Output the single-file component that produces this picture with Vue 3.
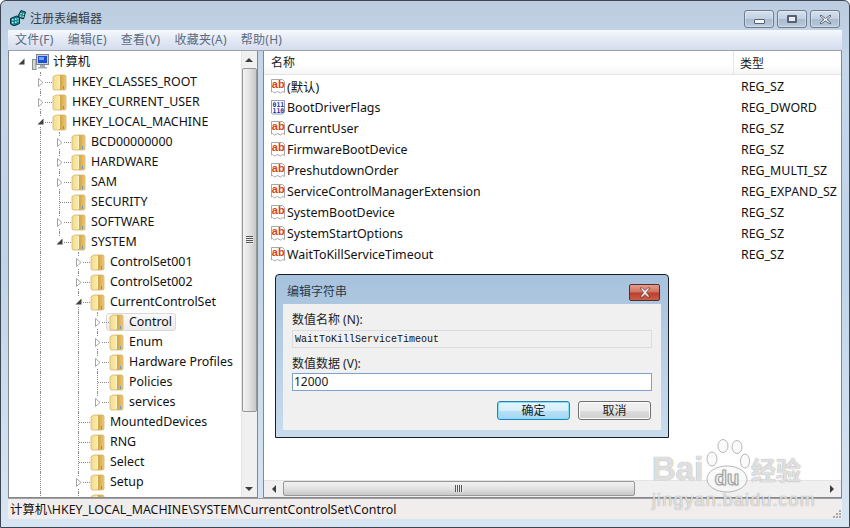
<template>
  <div class="window">
    <div class="titlebar">
      <svg class="app-icon" width="16" height="16" viewBox="0 0 16 16">
        <path d="M0.500 8.500l6-2.500 3 1.500v6l-5.500 2.500-3.500-2z" fill="#14808e" stroke="#07303c" />
        <path d="M2 9h1.500v1.500H2zM5 8.500h1.500V10H5zM2 12h1.500v1.500H2zM5 11.500h1.500V13H5zM7.500 8h1v1.500h-1zM7.500 10.500h1V12h-1z" fill="#b8f4f4" />
        <path d="M8 6l3-5.500 4.500 1.500-2 7-4-1.500z" fill="#1f8f86" stroke="#07303c" />
        <path d="M10.500 3h1.200v1.200h-1.200zM13 3.500h1.200v1.200H13zM10 5.500h1.200v1.200H10zM12.500 6h1.200v1.200h-1.200z" fill="#c6f7ee" />
      </svg>
      <span class="title">注册表编辑器</span>
      <div class="caption-btns">
        <div class="cap-btn cap-min"><i></i></div>
        <div class="cap-btn cap-max"><i></i></div>
        <div class="cap-btn cap-close">
          <svg width="13" height="11" viewBox="0 0 13 11"><path d="M2 1l4.500 3.500L11 1l1 1-4 3.500L12 9l-1 1-4.500-3L2 10 1 9l4-3.500L1 2z" fill="#f4f6f8" stroke="#5a6a7c" stroke-width="1" /></svg>
        </div>
      </div>
    </div>

    <div class="menubar">
      <span v-for="m in menus" :key="m" class="menu-item">{{ m }}</span>
    </div>

    <div class="main">
      <div class="tree-pane">
        <div class="tree-scroll">
          <div v-for="(row, i) in rows" :key="i" class="tree-row" :class="{ root: row.level === 0 }">
            <span
              v-for="(g, j) in row.guides"
              :key="j"
              class="guide"
              :class="{ on: g }"
            ></span>
            <span class="expander" :class="{ stem: row.level > 0, 'stem-end': row.last }">
              <span v-if="row.level > 0" class="hdots"></span>
              <svg v-if="row.state === 'open'" class="arrow" width="9" height="9" viewBox="0 0 9 9"><path d="M7.500 1.500v6h-6z" fill="#404040" /></svg>
              <svg v-else-if="row.state === 'closed'" class="arrow" width="9" height="11" viewBox="0 0 9 11"><path d="M2.500 1.500l4.500 4-4.500 4z" fill="#fff" stroke="#a6a6a6" /></svg>
            </span>
            <span class="node" :class="{ selected: row.selected }">
              <svg v-if="row.level === 0" class="computer" width="17" height="18" viewBox="0 0 17 18">
                <rect x="0.500" y="6.500" width="3.500" height="10" fill="#d4d7d6" stroke="#8b938f" />
                <rect x="4.500" y="1.500" width="12" height="10" fill="#c9ced4" stroke="#7a8490" />
                <rect x="6" y="3" width="9" height="7" fill="#1d4fd0" />
                <rect x="7" y="4" width="5" height="3" fill="#6aa6ff" />
                <path d="M8 12h5v2H8zM6 14h9v1.500H6z" fill="#a4abb0" />
              </svg>
              <svg v-else class="folder" width="15" height="17" viewBox="0 0 15 17">
                <defs>
                  <linearGradient id="fold" x1="0" x2="1" y1="0" y2="0">
                    <stop offset="0" stop-color="#f4dc8c" />
                    <stop offset=".42" stop-color="#f9e9a6" />
                    <stop offset=".58" stop-color="#d3a548" />
                    <stop offset="1" stop-color="#ecca7a" />
                  </linearGradient>
                </defs>
                <path d="M1 2.500l3-1.500h9l1 1v13l-1 1H2l-1-1z" fill="url(#fold)" stroke="#d3b670" stroke-width=".8" />
                <path d="M7 2h1v13H7z" fill="#fdf4c8" />
                <path d="M11 12h1v3h-1z" fill="#5b9fd8" />
              </svg>
              <span v-if="row.name" class="node-label">{{ row.name }}</span>
            </span>
          </div>
        </div>
        <div class="vscroll">
          <div class="sb-btn"><i class="tri-up"></i></div>
          <div class="v-track">
            <div class="v-thumb"><i class="v-grip"></i></div>
          </div>
          <div class="sb-btn"><i class="tri-down"></i></div>
        </div>
      </div>

      <div class="list-pane">
        <div class="list-head">
          <div class="col-name">名称</div>
          <div class="col-type">类型</div>
        </div>
        <div class="list-body">
          <div v-for="v in values" :key="v.name" class="list-row">
            <div class="col-name cell">
              <svg v-if="v.bin" class="val-icon" width="16" height="17" viewBox="0 0 16 17">
                <path d="M1.500 1.500h13v12l-2 1.500h-10l-1-1z" fill="#fff" stroke="#8d97c0" />
                <text class="bits"><tspan x="2.500" y="7.500">011</tspan><tspan x="2.500" y="13.500">110</tspan></text>
              </svg>
              <svg v-else class="val-icon" width="16" height="17" viewBox="0 0 16 17">
                <path d="M1.500 1.500h11l2 2v11l-2-1-2 1.500-3-1.500-3 1.500-2-1.500-1 .5z" fill="#fff" stroke="#a8a8a8" />
                <text x="1.800" y="10" class="ab">ab</text>
              </svg>
              <span>{{ v.name }}</span>
            </div>
            <div class="col-type cell">{{ v.type }}</div>
          </div>
        </div>
        <div class="hscroll">
          <div class="sb-btn h"><i class="tri-left"></i></div>
          <div class="h-track">
            <div class="h-thumb"><i class="h-grip"></i></div>
          </div>
          <div class="sb-btn h"><i class="tri-right"></i></div>
        </div>
      </div>
    </div>

    <div class="statusbar">
      <span>计算机\HKEY_LOCAL_MACHINE\SYSTEM\CurrentControlSet\Control</span>
      <svg class="grip" width="10" height="10" viewBox="0 0 10 10">
        <path d="M7 1h2v2H7zM4 4h2v2H4zM7 4h2v2H7zM1 7h2v2H1zM4 7h2v2H4zM7 7h2v2H7z" fill="#a9a9a9" />
      </svg>
    </div>

    <!-- 编辑字符串 对话框 -->
    <div class="dialog">
      <div class="dlg-title">
        <span class="dlg-caption">编辑字符串</span>
        <div class="dlg-close">
          <svg width="14" height="11" viewBox="0 0 14 11"><path d="M2 1h2.500L7 3.500 9.500 1H12L8.500 5.500 12 10H9.500L7 7.500 4.500 10H2l3.500-4.500z" fill="#f6eeee" stroke="#6a3028" stroke-width=".7" /></svg>
        </div>
      </div>
      <div class="dlg-body">
        <div class="dlg-label">数值名称 (N):</div>
        <div class="dlg-field readonly">WaitToKillServiceTimeout</div>
        <div class="dlg-label second">数值数据 (V):</div>
        <div class="dlg-field edit">12000</div>
        <div class="dlg-btns">
          <div class="dlg-btn default">确定</div>
          <div class="dlg-btn">取消</div>
        </div>
      </div>
    </div>

    <!-- 水印 -->
    <div class="watermark">
      <div class="wm-main">
        <span class="wm-bai">Bai</span>
        <svg class="paw" width="46" height="56" viewBox="0 0 46 56">
          <g fill="#f8f8f8" fill-opacity=".75" stroke="#9a9a9a" stroke-opacity=".7" stroke-width="1">
            <ellipse cx="8" cy="20" rx="5" ry="7" />
            <ellipse cx="19" cy="7" rx="5" ry="6.500" />
            <ellipse cx="33" cy="8" rx="5" ry="6.500" />
            <ellipse cx="41" cy="22" rx="4.500" ry="7" />
            <ellipse cx="23" cy="40" rx="20" ry="13" />
          </g>
          <text x="23" y="46" text-anchor="middle" class="wm-du">du</text>
        </svg>
        <span class="wm-cn">经验</span>
      </div>
      <div class="wm-url">jingyan.baidu.com</div>
    </div>
  </div>
</template>

<script setup>
const menus = ['文件(F)', '编辑(E)', '查看(V)', '收藏夹(A)', '帮助(H)']

const tree = {
  name: '计算机',
  children: [
    { name: 'HKEY_CLASSES_ROOT', closed: true },
    { name: 'HKEY_CURRENT_USER', closed: true },
    {
      name: 'HKEY_LOCAL_MACHINE',
      more: true,
      children: [
        { name: 'BCD00000000', closed: true },
        { name: 'HARDWARE', closed: true },
        { name: 'SAM', closed: true },
        { name: 'SECURITY' },
        { name: 'SOFTWARE', closed: true },
        {
          name: 'SYSTEM',
          children: [
            { name: 'ControlSet001', closed: true },
            { name: 'ControlSet002', closed: true },
            {
              name: 'CurrentControlSet',
              children: [
                { name: 'Control', closed: true, selected: true },
                { name: 'Enum', closed: true },
                { name: 'Hardware Profiles', closed: true },
                { name: 'Policies' },
                { name: 'services', closed: true }
              ]
            },
            { name: 'MountedDevices' },
            { name: 'RNG' },
            { name: 'Select' },
            { name: 'Setup', closed: true },
            // 最后一行被状态栏遮住，只露出文件夹顶部
            { name: '' }
          ]
        }
      ]
    }
  ]
}

// 把树展开成行，guides 记录每一层是否画竖线
const rows = []
function walk(node, level, guides, isLast) {
  const last = isLast && !node.more
  rows.push({
    name: node.name,
    level,
    guides,
    last,
    selected: node.selected,
    state: node.children ? 'open' : node.closed ? 'closed' : null
  })
  const kids = node.children || []
  kids.forEach((kid, i) => {
    const next = level === 0 ? [] : [...guides, !last]
    walk(kid, level + 1, next, i === kids.length - 1)
  })
}
walk(tree, 0, [], true)

const values = [
  { name: '(默认)', type: 'REG_SZ' },
  { name: 'BootDriverFlags', type: 'REG_DWORD', bin: true },
  { name: 'CurrentUser', type: 'REG_SZ' },
  { name: 'FirmwareBootDevice', type: 'REG_SZ' },
  { name: 'PreshutdownOrder', type: 'REG_MULTI_SZ' },
  { name: 'ServiceControlManagerExtension', type: 'REG_EXPAND_SZ' },
  { name: 'SystemBootDevice', type: 'REG_SZ' },
  { name: 'SystemStartOptions', type: 'REG_SZ' },
  { name: 'WaitToKillServiceTimeout', type: 'REG_SZ' }
]
</script>

<style>
html,
body {
  margin: 0;
  background: #fff;
}
</style>

<style scoped>
.window {
  position: relative;
  width: 850px;
  height: 528px;
  box-sizing: border-box;
  display: flex;
  flex-direction: column;
  padding: 0 7px 8px 7px;
  overflow: hidden;
  background: linear-gradient(#bccde0 0, #c4d6ea 60px, #bfd4e9 260px, #d8e6f3 528px);
  border: 1px solid #3d4650;
  border-radius: 6px 6px 0 0;
  font-family: "Noto Sans", "Noto Sans CJK SC", sans-serif;
  color: #111;
}

.titlebar {
  height: 29px;
  display: flex;
  align-items: center;
  flex: none;
  padding-top: 4px;
  box-sizing: border-box;
}
.app-icon {
  margin: 0 4px 0 2px;
}
.title {
  font-size: 12px;
  color: #333d48;
}
.caption-btns {
  margin-left: auto;
  margin-right: 2px;
  display: flex;
  gap: 3px;
  align-self: flex-start;
  margin-top: 5px;
}
.cap-btn {
  width: 28px;
  height: 16px;
  border: 1px solid #6d7c8f;
  border-radius: 3px;
  background: linear-gradient(#d4e0ee, #c0cfe0 50%, #a9bbd0 52%, #bccadb);
  display: flex;
  align-items: center;
  justify-content: center;
  box-shadow: inset 0 0 0 1px rgba(255, 255, 255, 0.35);
}
.cap-min i {
  width: 9px;
  height: 3px;
  margin-top: 4px;
  background: #f4f6f8;
  border: 1px solid #56606e;
  border-radius: 1px;
}
.cap-max i {
  width: 6px;
  height: 4px;
  border: 2px solid #56606e;
  background: #e8eef5;
  border-radius: 1px;
}

.menubar {
  height: 21px;
  flex: none;
  display: flex;
  align-items: center;
  background: linear-gradient(#f6f9fd, #e4eaf5 45%, #d5dcee);
  font-size: 12px;
  letter-spacing: 0.25px;
  color: #5b6b80;
  padding: 0 0 2px 7px;
  gap: 14px;
  border-bottom: 1px solid #9aa3ad;
  box-sizing: border-box;
}
.menu-item {
  white-space: nowrap;
}

.main {
  flex: 1;
  display: flex;
  min-height: 0;
  gap: 5px;
}

.tree-pane {
  width: 250px;
  flex: none;
  display: flex;
  background: #fff;
  border: 1px solid #828790;
  border-top: none;
  box-sizing: border-box;
  overflow: hidden;
}
.tree-scroll {
  flex: 1;
  min-width: 0;
  padding-top: 1px;
  overflow: hidden;
}
.tree-row {
  height: 20px;
  display: flex;
  align-items: center;
  font-size: 12.4px;
}
.guide {
  width: 19px;
  height: 20px;
  flex: none;
  position: relative;
}
.guide:first-child {
  margin-left: 13px;
}
.guide.on::before {
  content: "";
  position: absolute;
  left: 18px;
  top: 0;
  bottom: 0;
  border-left: 1px dotted #8a8a8a;
}
.tree-row > .expander:first-child {
  margin-left: 13px;
}
.tree-row.root > .expander:first-child {
  margin-left: -6px;
}
.expander {
  width: 19px;
  height: 20px;
  flex: none;
  position: relative;
}
.expander.stem::before {
  content: "";
  position: absolute;
  left: 18px;
  top: 0;
  height: 20px;
  border-left: 1px dotted #8a8a8a;
}
.expander.stem-end::before {
  height: 10px;
}
.hdots {
  position: absolute;
  left: 19px;
  width: 11px;
  top: 10px;
  border-top: 1px dotted #8a8a8a;
}
.arrow {
  position: absolute;
  left: 14px;
  top: 5px;
  background: #fff;
}
.node {
  display: flex;
  align-items: center;
  margin-left: 11px;
  height: 18px;
  box-sizing: border-box;
  white-space: nowrap;
  background: #fff;
}
.node.selected {
  margin-left: 8px;
  padding: 0 3px 0 2px;
  border: 1px solid #d9d9d9;
  border-radius: 3px;
  background: linear-gradient(#fafafa, #ececec);
}
.folder,
.computer {
  flex: none;
}
.computer {
  margin: 0 -1px 0 -1px;
}
.node-label {
  margin-left: 5px;
  line-height: 16px;
}

.vscroll {
  width: 16px;
  flex: none;
  display: flex;
  flex-direction: column;
  background: #f0f0f0;
  box-shadow: inset 1px 0 0 #e4e4e4;
}
.sb-btn {
  height: 17px;
  flex: none;
  display: flex;
  align-items: center;
  justify-content: center;
}
.sb-btn.h {
  width: 19px;
  height: auto;
}
.tri-up,
.tri-down,
.tri-left,
.tri-right {
  width: 0;
  height: 0;
  display: block;
  border-style: solid;
  border-color: transparent;
}
.tri-up {
  border-width: 0 4px 4px;
  border-bottom-color: #3c3c3c;
}
.tri-down {
  border-width: 4px 4px 0;
  border-top-color: #3c3c3c;
}
.tri-left {
  border-width: 4px 4px 4px 0;
  border-right-color: #3c3c3c;
}
.tri-right {
  border-width: 4px 0 4px 4px;
  border-left-color: #3c3c3c;
}
.v-track {
  flex: 1;
  min-height: 0;
}
.v-thumb {
  height: 344px;
  margin: 0 0 0 1px;
  box-sizing: border-box;
  border: 1px solid #979797;
  border-radius: 2px;
  background: linear-gradient(90deg, #f2f2f2, #e2e2e2 50%, #c8c8c8);
  display: flex;
  align-items: center;
  justify-content: center;
}
.v-grip {
  width: 7px;
  height: 8px;
  background: repeating-linear-gradient(#555 0 1px, #eee 1px 2px);
}

.list-pane {
  flex: 1;
  min-width: 0;
  display: flex;
  flex-direction: column;
  background: #fff;
  border: 1px solid #828790;
  border-top: none;
  box-sizing: border-box;
}
.list-head {
  height: 24px;
  flex: none;
  display: flex;
  align-items: center;
  font-size: 12px;
  background: linear-gradient(#fff, #fff 55%, #f5f6f7);
  border-bottom: 1px solid #e5e5e5;
  box-sizing: border-box;
  color: #222;
}
.list-head .col-name {
  width: 470px;
  padding-left: 7px;
  box-sizing: border-box;
  border-right: 1px solid #e5e5e5;
  line-height: 24px;
}
.list-head .col-type {
  padding-left: 6px;
}
.list-body {
  flex: 1;
  padding-top: 1px;
  overflow: hidden;
}
.list-row {
  height: 21px;
  display: flex;
  align-items: center;
  font-size: 12.4px;
}
.cell.col-name {
  width: 477px;
  flex: none;
  padding-left: 6px;
  box-sizing: border-box;
  display: flex;
  align-items: center;
  gap: 1px;
  white-space: nowrap;
}
.cell.col-type {
  white-space: nowrap;
}
.val-icon {
  flex: none;
}
.bits {
  font: bold 6.500px "DejaVu Sans Mono", monospace;
  fill: #17309c;
}
.ab {
  font: bold 11px "Liberation Sans", sans-serif;
  fill: #d8431a;
}

.hscroll {
  height: 17px;
  flex: none;
  display: flex;
  background: #f0f0f0;
  box-shadow: inset 0 1px 0 #e4e4e4;
}
.h-track {
  flex: 1;
  min-width: 0;
  padding-top: 1px;
}
.h-thumb {
  width: 352px;
  height: 15px;
  box-sizing: border-box;
  border: 1px solid #979797;
  border-radius: 2px;
  background: linear-gradient(#f2f2f2, #e2e2e2 50%, #c8c8c8);
  display: flex;
  align-items: center;
  justify-content: center;
}
.h-grip {
  width: 8px;
  height: 7px;
  background: repeating-linear-gradient(90deg, #555 0 1px, #eee 1px 2px);
}

.statusbar {
  height: 21px;
  flex: none;
  display: flex;
  align-items: center;
  justify-content: space-between;
  background: #f1edec;
  border-top: 1px solid #a0a0a0;
  box-sizing: border-box;
  font-size: 12.4px;
  padding-left: 2px;
  white-space: nowrap;
}
.grip {
  align-self: flex-end;
}

.dialog {
  position: absolute;
  left: 274px;
  top: 273px;
  width: 394px;
  height: 164px;
  box-sizing: border-box;
  border: 1px solid #1a1f24;
  border-radius: 4px 4px 0 0;
  background: linear-gradient(#a7c2dd, #b8cfe6 50%, #c9dcee);
  padding: 0 7px 7px;
  display: flex;
  flex-direction: column;
}
.dlg-title {
  height: 29px;
  flex: none;
  display: flex;
  font-size: 12px;
  color: #2d3a48;
  padding-left: 4px;
  justify-content: space-between;
}
.dlg-caption {
  margin-top: 8px;
  line-height: 17px;
}
.dlg-close {
  width: 31px;
  height: 17px;
  margin: 9px 1px 0 0;
  border: 1px solid #5a2c26;
  border-radius: 2px;
  box-sizing: border-box;
  background: linear-gradient(#e39d90, #d0705f 48%, #b83f2c 52%, #c95d48);
  display: flex;
  align-items: center;
  justify-content: center;
}
.dlg-body {
  flex: 1;
  background: #f0f0f0;
  padding: 7px 9px 0;
  font-size: 12px;
  color: #222;
}
.dlg-label {
  line-height: 17px;
  height: 17px;
}
.dlg-label.second {
  margin-top: 7px;
}
.dlg-field {
  height: 18px;
  margin-top: 2px;
  box-sizing: border-box;
  line-height: 16px;
  white-space: nowrap;
}
.dlg-label.second + .dlg-field {
  margin-top: 1px;
}
.dlg-field.readonly {
  padding-left: 2px;
  padding-top: 1px;
  border: 1px solid #dcdcdc;
  background: #f0f0f0;
  font-family: "Liberation Mono", monospace;
  font-size: 10px;
  color: #111;
}
.dlg-field.edit {
  padding-left: 1px;
  border: 1px solid #7da2ce;
  background: #fff;
  font-size: 12px;
}
.dlg-btns {
  display: flex;
  justify-content: flex-end;
  gap: 8px;
  margin: 10px 1px 0 0;
}
.dlg-btn {
  width: 73px;
  height: 19px;
  box-sizing: border-box;
  border: 1px solid #707070;
  border-radius: 3px;
  background: linear-gradient(#f2f2f2, #ebebeb 50%, #dddddd 52%, #cfcfcf);
  text-align: center;
  line-height: 17px;
  font-size: 12px;
  box-shadow: inset 0 0 0 1px #fcfcfc;
}
.dlg-btn.default {
  border-color: #2c7fb8;
  background: linear-gradient(#e6f5fc, #d5eefb 50%, #b7e0f6 52%, #a5d6f2);
  box-shadow: inset 0 0 0 1px #7fe0fa;
}

.watermark {
  position: absolute;
  left: 651px;
  top: 438px;
  width: 155px;
  height: 72px;
  pointer-events: none;
  color: rgba(250, 250, 250, 0.8);
}
.wm-main {
  display: flex;
  align-items: flex-end;
  height: 56px;
  white-space: nowrap;
  text-shadow: 0 0 1px rgba(110, 110, 110, 0.9);
}
.wm-bai {
  font: bold 33px/38px "Liberation Sans", sans-serif;
  width: 52px;
  margin-bottom: 7px;
}
.paw {
  flex: none;
}
.wm-du {
  font: bold 20px "Liberation Sans", sans-serif;
  fill: #f6f6f6;
  stroke: #999;
  stroke-width: 0.5px;
}
.wm-cn {
  font: bold 25px/32px "Noto Sans CJK SC", sans-serif;
  margin-left: 1px;
  margin-bottom: 10px;
}
.wm-url {
  margin-top: -5px;
  font: 18px/20px "Liberation Sans", sans-serif;
  letter-spacing: 1.1px;
  text-shadow: 0 0 1px rgba(110, 110, 110, 0.9);
  white-space: nowrap;
}
</style>
